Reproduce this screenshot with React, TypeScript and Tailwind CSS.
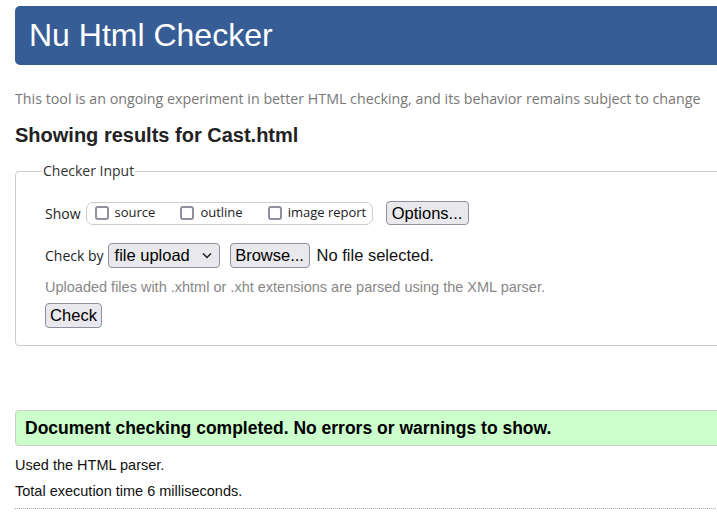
import React from "react";

const seg = { fontFamily: '"Open Sans", "Noto Sans", sans-serif' };

function Box({ label }: { label: string }) {
  return (
    <label className="flex items-center">
      <span className="inline-block w-[14px] h-[14px] border-2 border-[#8f8f9d] rounded-[3px] bg-white" />
      <span className="ml-[6px] text-[13px] text-[#222]" style={seg}>{label}</span>
    </label>
  );
}

export default function App() {
  return (
    <div className="w-[717px] h-[512px] overflow-hidden bg-white" style={{ fontFamily: '"Liberation Sans", Arial, sans-serif' }}>
      <div className="w-[900px] pl-[15px]">
        <div className="mt-[6px] h-[59px] bg-[#365d95] rounded-l-[5px] pl-[14px] text-white text-[32px] leading-[59px]">
          Nu Html Checker
        </div>
        <p className="mt-[24px] text-[14.25px] leading-[20px] text-[#777]" style={seg}>
          This tool is an ongoing experiment in better HTML checking, and its behavior remains subject to change
        </p>
        <h2 className="mt-[14px] text-[20px] leading-[24px] font-bold text-[#222]">Showing results for Cast.html</h2>
        <fieldset className="mt-[14px] border border-[#ccc] rounded-[4px] pb-[17px]">
          <legend className="ml-[26px] px-[1px] text-[14px] leading-[20px] text-[#333]" style={seg}>Checker Input</legend>
          <div className="pl-[29px]">
            <div className="mt-[20px] flex items-center h-[24px]">
              <span className="text-[14px] text-[#222]" style={seg}>Show</span>
              <span className="ml-[5px] h-[23px] w-[287px] flex items-center gap-[25px] border border-[#ccc] rounded-[7px] pl-[8px]">
                <Box label="source" />
                <Box label="outline" />
                <Box label="image report" />
              </span>
              <button className="ml-[13px] h-[24px] w-[83px] bg-[#e9e9ed] border border-[#8f8f9d] rounded-[4px] text-[16.5px] text-black leading-none">
                Options...
              </button>
            </div>
            <div className="mt-[18px] flex items-center h-[25px]">
              <span className="text-[14px] text-[#222]" style={seg}>Check by</span>
              <span className="ml-[4px] h-[25px] w-[112px] flex items-center justify-between bg-[#e9e9ed] border border-[#8f8f9d] rounded-[4px] pl-[6px] pr-[7px] text-[16.5px] text-black">
                file upload
                <svg width="10" height="7" viewBox="0 0 10 7"><path d="M1 1.5 L5 5.5 L9 1.5" fill="none" stroke="#222" strokeWidth="1.5" /></svg>
              </span>
              <button className="ml-[10px] h-[25px] w-[80px] bg-[#e9e9ed] border border-[#8f8f9d] rounded-[4px] text-[16.5px] text-black leading-none">
                Browse...
              </button>
              <span className="ml-[7px] text-[16.5px] text-[#111]">No file selected.</span>
            </div>
            <p className="mt-[9px] text-[14.5px] leading-[20px] text-[#888]">
              Uploaded files with .xhtml or .xht extensions are parsed using the XML parser.
            </p>
            <button className="mt-[6px] h-[25px] w-[57px] bg-[#e9e9ed] border border-[#8f8f9d] rounded-[4px] text-[16.5px] text-black leading-none block">
              Check
            </button>
          </div>
        </fieldset>
        <div className="mt-[64px] h-[36px] bg-[#ccffcc] border border-[#ccc] rounded-l-[4px] pl-[9px] flex items-center text-[17.5px] font-bold text-black">
          Document checking completed. No errors or warnings to show.
        </div>
        <p className="mt-[9px] text-[14.5px] leading-[20px] text-[#111]">Used the HTML parser.</p>
        <p className="mt-[6px] text-[14.5px] leading-[20px] text-[#111]">Total execution time 6 milliseconds.</p>
        <div className="mt-[7px] border-t border-dotted border-[#aaa]" />
      </div>
    </div>
  );
}
